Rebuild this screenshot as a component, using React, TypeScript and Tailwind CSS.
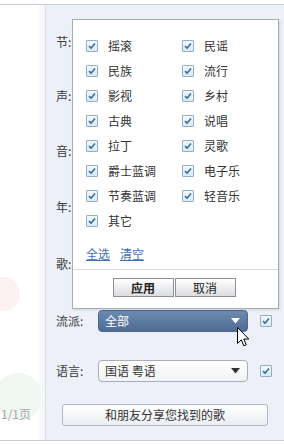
import React from "react";

const font = { fontFamily: '"Noto Sans CJK SC", "Liberation Sans", sans-serif' };

const genres: [string, string | null][] = [
  ["摇滚", "民谣"],
  ["民族", "流行"],
  ["影视", "乡村"],
  ["古典", "说唱"],
  ["拉丁", "灵歌"],
  ["爵士蓝调", "电子乐"],
  ["节奏蓝调", "轻音乐"],
  ["其它", null],
];

function Check({ className = "" }: { className?: string }) {
  return (
    <span
      className={`flex h-[12px] w-[12px] shrink-0 items-center justify-center rounded-[1px] border border-[#8fb0c8] bg-gradient-to-b from-[#f4f8fc] to-[#dce8f3] ${className}`}
    >
      <svg width="8" height="8" viewBox="0 0 8 8">
        <path d="M1 4.2 L3.1 6.2 L7 1.6" fill="none" stroke="#2f6e9c" strokeWidth="1.6" />
      </svg>
    </span>
  );
}

function Label({ text }: { text: string }) {
  return <span className="w-[42px] shrink-0 text-[12px] text-[#3a3a3a]">{text}</span>;
}

function Cursor() {
  return (
    <svg
      className="pointer-events-none absolute left-[237px] top-[327px]"
      width="13"
      height="21"
      viewBox="0 0 13 21"
    >
      <path
        d="M0.5 0.5 L0.5 16.5 L4.3 12.8 L6.8 18.8 L9.2 17.8 L6.8 12 L11.8 12 Z"
        fill="#fff"
        stroke="#000"
        strokeWidth="1"
      />
    </svg>
  );
}

export default function App() {
  return (
    <div className="relative h-[445px] w-[284px] overflow-hidden bg-white" style={font}>
      <div className="h-[4px]" />
      <div className="flex h-[437px] border-y border-[#c9ccd2]">
        {/* left column */}
        <div className="relative w-[46px] shrink-0 overflow-hidden border-r border-[#dde0e6] bg-gradient-to-r from-white from-[80%] to-[#f3f4f6]">
          <div className="absolute left-[-14px] top-[272px] h-[34px] w-[34px] rounded-full bg-[#fdf2f2]" />
          <div className="absolute left-[-6px] top-[368px] h-[48px] w-[48px] rounded-full bg-[#f1f7f2]" />
          <div className="absolute left-[1px] top-[400px] text-[12px] text-[#a8a8a8]">1/1页</div>
        </div>

        {/* right panel */}
        <div className="flex flex-1 flex-col bg-[#edf0f8] pl-[10px]">
          <div className="mt-[26px] flex h-[22px] items-center"><Label text="节:" /></div>
          <div className="mt-[32px] flex h-[22px] items-center"><Label text="声:" /></div>
          <div className="mt-[33px] flex h-[22px] items-center"><Label text="音:" /></div>
          <div className="mt-[34px] flex h-[22px] items-center"><Label text="年:" /></div>
          <div className="mt-[35px] flex h-[22px] items-center"><Label text="歌:" /></div>
          <div className="mt-[35px] flex h-[22px] items-center">
            <Label text="流派:" />
            <div className="flex h-[22px] w-[150px] items-center justify-between rounded-[4px] border border-[#4a6890] bg-gradient-to-b from-[#6d8bb0] to-[#4d6c94] pl-[6px] pr-[7px] text-[12px] text-white">
              <span>全部</span>
              <svg width="9" height="6" viewBox="0 0 9 6">
                <path d="M0 0 H9 L4.5 5.5 Z" fill="#fff" />
              </svg>
            </div>
            <Check className="ml-[12px]" />
          </div>
          <div className="mt-[28px] flex h-[22px] items-center">
            <Label text="语言:" />
            <div className="flex h-[22px] w-[150px] items-center justify-between rounded-[4px] border border-[#a9adb5] bg-gradient-to-b from-white to-[#f1f2f4] pl-[6px] pr-[7px] text-[12px] text-[#333]">
              <span>国语 粤语</span>
              <svg width="9" height="6" viewBox="0 0 9 6">
                <path d="M0 0 H9 L4.5 5.5 Z" fill="#333" />
              </svg>
            </div>
            <Check className="ml-[12px]" />
          </div>
          <button className="ml-[6px] mt-[22px] h-[22px] w-[206px] rounded-[3px] border border-[#b4b8c0] bg-gradient-to-b from-white to-[#eceef1] text-[12px] text-[#333]">
            和朋友分享您找到的歌
          </button>
        </div>
      </div>

      {/* genre popup */}
      <div className="absolute left-[72px] top-[19px] flex h-[290px] w-[207px] flex-col border border-[#a9acb2] bg-white shadow-[1px_1px_2px_rgba(0,0,0,0.12)]">
        <div className="flex flex-col pl-[13px] pt-[13px]">
          {genres.map(([a, b]) => (
            <div key={a} className="flex h-[25px] items-center text-[12px] text-[#333]">
              <div className="flex w-[96px] items-center gap-[10px]">
                <Check />
                <span>{a}</span>
              </div>
              {b && (
                <div className="flex items-center gap-[10px]">
                  <Check />
                  <span>{b}</span>
                </div>
              )}
            </div>
          ))}
          <div className="mt-[12px] flex gap-[10px] text-[12px] text-[#3d6fb0]">
            <span className="underline">全选</span>
            <span className="underline">清空</span>
          </div>
        </div>
        <div className="mt-[6px] border-t border-[#d8dade]" />
        <div className="flex justify-center gap-[1px] pt-[8px] pr-[3px]">
          <button className="h-[19px] w-[61px] border border-[#8d9096] bg-gradient-to-b from-white to-[#dcdde0] text-[12px] font-bold text-[#222]">
            应用
          </button>
          <button className="h-[19px] w-[61px] border border-[#8d9096] bg-gradient-to-b from-white to-[#dcdde0] text-[12px] text-[#222]">
            取消
          </button>
        </div>
      </div>

      <Cursor />
    </div>
  );
}
